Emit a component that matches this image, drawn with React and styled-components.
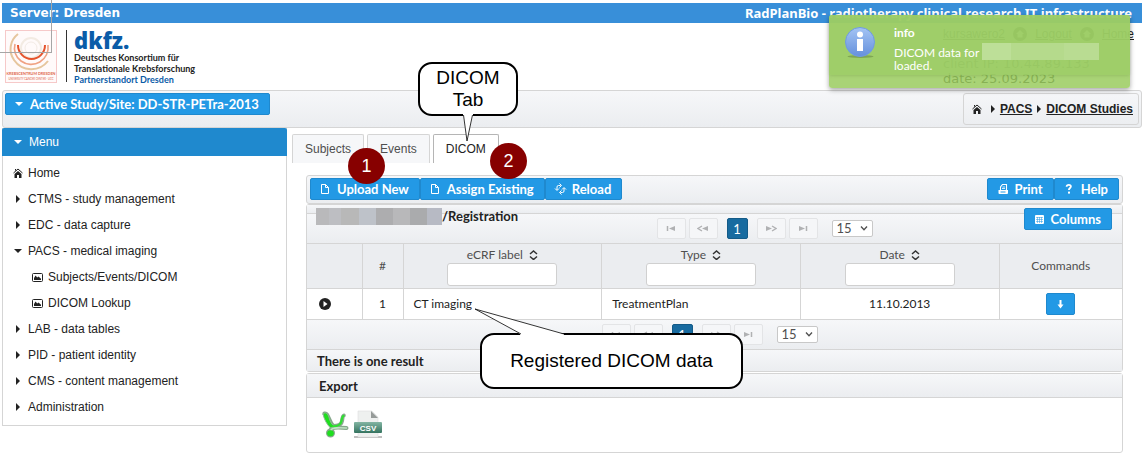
import React from "react";
import styled, { createGlobalStyle, css } from "styled-components";

const arial = `"Liberation Sans", Arial, sans-serif`;
const lato = `Lato, sans-serif`;
const line = "#d5d5d5";
const silver = "linear-gradient(#f6f7f9, #ebedf0)";

const Global = createGlobalStyle`
  *, *::before, *::after { box-sizing: border-box; }
  body { margin: 0; background: #fff; color: #222; font: 12px/16px ${arial}; }
  ul { list-style: none; margin: 0; padding: 0; }
  button, input, select { font: inherit; margin: 0; }
  svg { display: block; flex: none; }
`;

const Page = styled.div`
  position: relative;
  padding: 3px 5px 20px 2px;
`;
const TitleBar = styled.div`
  display: flex;
  align-items: center;
  justify-content: space-between;
  height: 20px;
  padding: 0 10px 0 8px;
  background: #388fd9;
  color: #fff;
  white-space: nowrap;
`;
const ServerName = styled.strong`
  font: bold 12px/20px "DejaVu Sans", sans-serif;
`;
const ProductName = styled.strong`
  font: bold 13px/20px "Noto Sans", sans-serif;
`;
const Header = styled.header`
  display: flex;
  justify-content: space-between;
  height: 67px;
  padding: 0 8px 0 3px;
`;
const Logos = styled.div`
  display: flex;
  gap: 9px;
  padding-top: 7px;
`;
const Dkfz = styled.div`
  height: 52px;
  padding-left: 7px;
  border-left: 1px solid #333;
  color: #222;
  font: bold 9px/11px ${lato};
  white-space: nowrap;
`;
const DkfzName = styled.div`
  height: 22px;
  color: #0a5ca8;
  font: 800 22px/20px "Open Sans", sans-serif;
`;
const DkfzSite = styled.div`
  color: #0a5ca8;
`;
const Session = styled.div`
  width: 191px;
  padding-top: 2px;
  color: #444;
  font: 13px/15px "DejaVu Sans", sans-serif;
`;
const SessionLinks = styled.div`
  display: flex;
  align-items: center;
  justify-content: space-between;
  height: 18px;
  margin-bottom: 13px;
  font: 12px/18px ${arial};
`;
const TextLink = styled.a`
  color: #222;
  text-decoration: underline;
`;
const Growl = styled.div`
  position: absolute;
  top: 15px;
  right: 17px;
  width: 301px;
  height: 73px;
  border-radius: 3px;
  background: rgba(150, 201, 88, 0.82);
  box-shadow: 0 2px 5px rgba(0, 0, 0, 0.35);
`;
const GrowlCard = styled.div`
  display: flex;
  gap: 17px;
  height: 60px;
  padding: 11px 15px 0;
  border-radius: 3px;
  background: rgba(156, 205, 102, 0.8);
  box-shadow: 0 1px 3px rgba(80, 120, 40, 0.2);
  color: #fff;
  font: 12px/13px ${lato};
`;
const GrowlText = styled.div`
  display: flex;
  flex-direction: column;
  gap: 6px;
  strong { line-height: 14px; }
`;
const Redacted = styled.span`
  display: inline-block;
  width: ${(p) => p.$w}px;
  height: 17px;
  vertical-align: top;
  background: ${(p) => p.$bg};
`;
const GrowlLine = styled.div`
  white-space: nowrap;
  span { margin: -3px 0; }
`;

const StudyBar = styled.div`
  display: flex;
  justify-content: space-between;
  align-items: flex-start;
  height: 38px;
  padding: 2px;
  border: 1px solid ${line};
  border-radius: 3px;
  background: ${silver};
`;
const Button = styled.button`
  display: flex;
  align-items: center;
  justify-content: center;
  gap: ${(p) => p.$gap || 4}px;
  height: 22px;
  padding: 0 ${(p) => (p.$square ? 8 : 10)}px 0 8px;
  border: 1px solid #1f89ce;
  border-radius: 2px;
  background: #2399e5;
  color: #fff;
  font: bold 13px/20px ${lato};
  white-space: nowrap;
`;
const Crumbs = styled.nav`
  display: flex;
  align-items: center;
  gap: 2px;
  height: 32px;
  padding: 0 5px 0 8px;
  border: 1px solid ${line};
  border-radius: 3px;
  font-weight: bold;
  svg:nth-of-type(1) { margin-right: 4px; }
`;

const Columns = styled.div`
  display: flex;
  align-items: flex-start;
`;
const Side = styled.nav`
  flex: none;
  width: 285px;
  padding-bottom: 5px;
  border: 1px solid ${line};
  border-top: 0;
`;
const SideHead = styled.div`
  display: flex;
  align-items: center;
  gap: 6px;
  height: 28px;
  margin: 0 -1px 4px;
  padding-left: 11px;
  border-radius: 2px 2px 0 0;
  background: #1f89ce;
  color: #fff;
`;
const SideLink = styled.a`
  display: flex;
  align-items: center;
  gap: 5px;
  height: 26px;
  padding-left: ${(p) => (p.$sub ? 29 : 10)}px;
  color: #222;
  text-decoration: none;
`;
const Main = styled.main`
  flex: 1;
  min-width: 0;
  padding: 6px 19px 0 5px;
`;
const Tabs = styled.div`
  display: flex;
  gap: 3px;
  margin-bottom: 12px;
`;
const Tab = styled.button`
  height: 29px;
  padding: 0 12px;
  border: 1px solid ${(p) => (p.$on ? "#b5b5b5" : line)};
  border-bottom: 0;
  border-radius: 2px 2px 0 0;
  background: ${(p) => (p.$on ? "#fff" : "#f6f7f9")};
  color: ${(p) => (p.$on ? "#222" : "#4f4f4f")};
`;
const Content = styled.div`
  padding-left: 14px;
  font: 13px/16px ${lato};
`;
const Toolbar = styled.div`
  display: flex;
  justify-content: space-between;
  height: 29px;
  padding: 2px 3px;
  border: 1px solid ${line};
  border-radius: 3px;
  background: ${silver};
`;
const Group = styled.div`
  display: flex;
`;
const TableBox = styled.section`
  border: 1px solid ${line};
  border-radius: 3px;
`;
const TableTitle = styled.div`
  position: relative;
  z-index: 1;
  display: flex;
  justify-content: space-between;
  align-items: flex-start;
  height: 8px;
  padding: 3px 10px 0 9px;
  background: ${silver};
  strong { display: flex; }
`;
const Pager = styled.div`
  display: flex;
  align-items: center;
  justify-content: center;
  height: ${(p) => (p.$top ? 30 : 29)}px;
  padding-left: ${(p) => (p.$top ? 100 : 0)}px;
  padding-right: ${(p) => (p.$top ? 0 : 10)}px;
  border-top: ${(p) => (p.$top ? 1 : 0)}px solid ${line};
  background: ${silver};
`;
const PageSteps = styled.div`
  display: flex;
  gap: 3px;
`;
const PageStep = styled.button`
  display: grid;
  place-items: center;
  width: 29px;
  height: 21px;
  padding: 0;
  border: 1px solid #e3e4e6;
  border-radius: 2px;
  background: #f5f6f8;
  color: #b0b1b3;
`;
const PageNumber = styled.button`
  width: 21px;
  height: 21px;
  margin: 0 9px;
  padding: 0;
  border: 1px solid #145b88;
  border-radius: 2px;
  background: #186ba0;
  color: #fff;
`;
const SizePick = styled.label`
  position: relative;
  margin-left: 14px;
  svg { position: absolute; right: 5px; top: 5px; pointer-events: none; }
`;
const SizeSelect = styled.select`
  display: block;
  appearance: none;
  width: 41px;
  height: 17px;
  padding: 0 4px;
  border: 1px solid #c8c8c8;
  border-radius: 2px;
  background: #fff;
  color: #4f4f4f;
  line-height: 15px;
`;
const Table = styled.table`
  width: 100%;
  table-layout: fixed;
  border-collapse: collapse;
  font-size: 12px;
`;
const cell = css`
  padding: 0 10px;
  border: 1px solid ${line};
  &:first-child { border-left: 0; }
  &:last-child { border-right: 0; }
`;
const Th = styled.th`
  ${cell}
  height: 45px;
  background: #ebedf0;
  color: #4f4f4f;
  font-weight: normal;
`;
const Td = styled.td`
  ${cell}
  height: 31px;
  text-align: ${(p) => p.$align || "left"};
`;
const SortLabel = styled.label`
  display: flex;
  flex-direction: column;
  align-items: center;
`;
const SortName = styled.span`
  display: flex;
  align-items: center;
  gap: 6px;
`;
const Filter = styled.input`
  width: 110px;
  height: 23px;
  border: 1px solid #d0d0d0;
  border-radius: 3px;
  background: #fff;
`;
const Center = styled.div`
  display: flex;
  justify-content: center;
`;
const Expander = styled.button`
  display: block;
  margin-left: 2px;
  padding: 0;
  border: 0;
  background: none;
`;
const Strip = styled.div`
  height: ${(p) => p.$h}px;
  padding: ${(p) => p.$pad};
  border-top: ${(p) => (p.$line ? 1 : 0)}px solid ${line};
  border-bottom: ${(p) => (p.$line ? 0 : 1)}px solid ${line};
  background: ${silver};
  font-weight: bold;
`;
const ExportBox = styled.section`
  margin-top: 1px;
  border: 1px solid ${line};
  border-radius: 3px;
`;
const ExportBody = styled.div`
  display: flex;
  gap: 5px;
  height: 54px;
  padding: 12px 14px;
`;
const IconLink = styled.a`
  display: block;
`;

const Badge = styled.div`
  position: absolute;
  left: ${(p) => p.$x}px;
  top: ${(p) => p.$y}px;
  width: 37px;
  height: 36px;
  border-radius: 50%;
  background: #870000;
  color: #fff;
  font: 18px/36px ${arial};
  text-align: center;
`;
const Callout = styled.div`
  position: absolute;
  left: ${(p) => p.$x}px;
  top: ${(p) => p.$y}px;
  display: grid;
  place-items: center;
  width: ${(p) => p.$w}px;
  height: ${(p) => p.$h}px;
  border: 2px solid #000;
  border-radius: 14px;
  background: #fff;
  color: #000;
  font: 19px/22px ${arial};
  text-align: center;
  svg { position: absolute; left: ${(p) => p.$tx}px; top: ${(p) => p.$ty}px; }
`;

const Tri = ({ down, color = "#222" }) => (
  <svg width="10" height="10" viewBox="0 0 10 10" fill={color}>
    <path d={down ? "M1 3h8L5 7z" : "M3 1v8l4-4z"} />
  </svg>
);
const House = () => (
  <svg width="10" height="10" viewBox="0 0 10 10">
    <path d="M.5 5 5 1l4.500 4M2.500 2.600V1" fill="none" stroke="#222" />
    <path d="M5 3 1.500 6v4H4V7h2v3h2.500V6z" fill="#222" />
  </svg>
);
const Picture = () => (
  <svg width="11" height="9" viewBox="0 0 11 9">
    <rect x=".5" y=".5" width="10" height="8" rx="1" fill="#fff" stroke="#222" />
    <path d="M2 7V5l1.6-2.5L5.2 4.5 6.5 3.6 9 5.8V7z" fill="#222" />
  </svg>
);
const Doc = () => (
  <svg width="14" height="10" viewBox="0 0 14 10" fill="none" stroke="#fff">
    <path d="M2.500.5h4l3 3v6h-7zM6.500.5v3h3" />
  </svg>
);
const Refresh = () => (
  <svg width="14" height="12" viewBox="0 0 14 12" fill="none" stroke="#fff">
    <path d="M6.500 2.500H4.500a1.500 1.500 0 0 0-1.500 1.500v3M1 5.500l2 2 2-2M5.500.5l2 2-2 2M6.500 9.500h2a1.500 1.500 0 0 0 1.500-1.500V5M12 6.500l-2-2-2 2M7.500 11.500l-2-2 2-2" />
  </svg>
);
const Printer = () => (
  <svg width="14" height="10" viewBox="0 0 14 10">
    <path d="M4.500 6V3l2-2.500h4V6" fill="none" stroke="#fff" strokeWidth="1.100" />
    <path d="M6.500 3h2.500M6 4.500h3" stroke="#fff" strokeWidth=".8" />
    <path d="M2.500 6h9.500v3a1 1 0 0 1-1 1H3.500a1 1 0 0 1-1-1z" fill="#fff" />
    <path d="M4.500 8h5" stroke="#2399e5" />
  </svg>
);
const Question = () => (
  <svg width="14" height="10" viewBox="0 0 14 10">
    <path d="M3.600 2.800C3.700 1.400 4.600.9 5.800.9c1.300 0 2.100.7 2.100 1.700C7.900 4 5.900 4.100 5.900 6" fill="none" stroke="#fff" strokeWidth="1.800" />
    <rect x="5" y="7.600" width="2" height="2" fill="#fff" />
  </svg>
);
const Calendar = () => (
  <svg width="14" height="10" viewBox="0 0 14 10">
    <rect x="2" y="1" width="9" height="9" rx="1" fill="#fff" />
    <path d="M3 3.500h7M3 5.500h7M3 7.500h7M4.500 3v6M6.500 3v6M8.500 3v6" stroke="#2399e5" strokeWidth=".5" />
  </svg>
);
const Arrow = () => (
  <svg width="11" height="10" viewBox="0 0 11 10">
    <path d="M5.500 1v7" stroke="#fff" strokeWidth="2" />
    <path d="M2.500 5.500h6l-3 4z" fill="#fff" />
  </svg>
);
const Sort = () => (
  <svg width="9" height="10" viewBox="0 0 9 10" fill="none" stroke="#333" strokeWidth="1.500">
    <path d="M1 4 4.500 1 8 4M1 6.500l3.500 3 3.500-3" />
  </svg>
);
const Chevron = () => (
  <svg width="8" height="7" viewBox="0 0 8 7" fill="none" stroke="#4f4f4f" strokeWidth="1.300">
    <path d="M1 1.500 4 4.800 7 1.500" />
  </svg>
);
const stepShapes = {
  First: <><path d="M2.500 1v5" stroke="currentColor" strokeWidth="1.500" /><path d="M10 1v5L4 3.500z" fill="currentColor" /></>,
  Previous: <><path d="M5 1 1 3.500 5 6" fill="none" stroke="currentColor" strokeWidth="1.300" /><path d="M11 1v5L5 3.500z" fill="currentColor" /></>,
  Next: <><path d="M7 1l4 2.500L7 6" fill="none" stroke="currentColor" strokeWidth="1.300" /><path d="M1 1v5l6-2.500z" fill="currentColor" /></>,
  Last: <><path d="M9.500 1v5" stroke="currentColor" strokeWidth="1.500" /><path d="M2 1v5l6-2.500z" fill="currentColor" /></>,
};
const Step = ({ kind }) => (
  <PageStep aria-label={`${kind} page`}>
    <svg width="12" height="7" viewBox="0 0 12 7">{stepShapes[kind]}</svg>
  </PageStep>
);
const Paginator = ({ top }) => (
  <Pager $top={top}>
    <PageSteps><Step kind="First" /><Step kind="Previous" /></PageSteps>
    <PageNumber>1</PageNumber>
    <PageSteps><Step kind="Next" /><Step kind="Last" /></PageSteps>
    <SizePick>
      <SizeSelect aria-label="Rows per page" defaultValue="15"><option>15</option></SizeSelect>
      <Chevron />
    </SizePick>
  </Pager>
);

const CancerCenter = () => (
  <svg width="52" height="53" viewBox="0 0 52 53" fill="none" role="img" aria-label="Krebscentrum Dresden">
    <rect x=".5" y=".5" width="51" height="52" fill="#fffafa" stroke="#f6c9c9" />
    <circle cx="26" cy="18" r="10" stroke="#f3ebe3" strokeWidth="2" />
    <circle cx="26" cy="18" r="6" stroke="#f3ebe6" />
    <path d="M13 4A19 19 0 0 0 9 30 21 21 0 0 0 43 31" stroke="#e6c69e" strokeWidth="2" />
    <path d="M10 14a16 16 0 0 0 6 17A17 17 0 0 0 43 15" stroke="#f0a283" strokeWidth="1.600" />
    <path d="M13 15a13.500 14 0 0 0 27 0" stroke="#e5532d" strokeWidth="2" />
    <text x="26" y="45" textAnchor="middle" fill="#e0674a" fontFamily={lato} fontWeight="bold" fontSize="3.800">KREBSCENTRUM DRESDEN</text>
    <text x="26" y="50" textAnchor="middle" fill="#e0674a" fontFamily={lato} fontSize="2.700">UNIVERSITY CANCER CENTER · UCC</text>
  </svg>
);
const CrossHair = styled.div`
  position: absolute;
  left: 0;
  top: 0;
  width: 52px;
  height: 53px;
  border: solid #a6a6a6;
  border-width: 0 1px 1px 0;
`;
const InfoIcon = () => (
  <svg width="33" height="33" viewBox="0 0 33 33">
    <defs>
      <linearGradient id="info" x1="0" y1="0" x2="0" y2="1">
        <stop offset="0" stopColor="#a4c4f4" />
        <stop offset="1" stopColor="#6590dc" />
      </linearGradient>
    </defs>
    <ellipse cx="16.500" cy="30.500" rx="13" ry="1.500" fill="#7fa552" />
    <circle cx="16" cy="16" r="14.500" fill="url(#info)" stroke="#6f9be0" />
    <circle cx="16" cy="8.500" r="3" fill="#fff" />
    <path d="M13 13h6v12h-6z" fill="#fff" />
  </svg>
);
const Excel = () => (
  <svg width="28" height="28" viewBox="0 0 28 28" fill="none" strokeLinecap="round" strokeLinejoin="round">
    <g stroke="#86a88b" strokeWidth="4">
      <path d="M3.500 3.500c4-1 4 8 9 13" />
      <path d="M12.500 16c4 0 8-1 8.500-5 .5-3 .5-5 1.800-5.500" />
      <path d="M9 22c0-5 6-5 16.500-4" />
      <circle cx="9.500" cy="23" r="2.500" />
    </g>
    <path d="M2 4c3-3 5 0 6 3.500s2.500 7.500 6 9L9.500 18C5.500 14 3 9 2 4z" fill="#1fdf1f" stroke="#8fb795" />
    <path d="M12.500 16.300c4 0 7.500-2 8-5.500.5-3 .8-4.300 2-5" stroke="#2fe032" strokeWidth="2.200" />
    <path d="M10 20c2-3 8-2.500 15.500-2" stroke="#c2e3c5" strokeWidth="1.500" />
    <ellipse cx="9.500" cy="23.300" rx="3.300" ry="3" fill="#1fdf1f" />
  </svg>
);
const Csv = () => (
  <svg width="28" height="28" viewBox="0 0 28 28">
    <defs>
      <linearGradient id="band" x1="0" y1="0" x2="0" y2="1">
        <stop offset="0" stopColor="#83b5a3" />
        <stop offset="1" stopColor="#34735f" />
      </linearGradient>
    </defs>
    <path d="M0 27h28" stroke="#aaa" strokeWidth="1.500" />
    <path d="M4 1h14l6 6v20H4z" fill="#eef0ef" stroke="#ddd" strokeWidth=".6" />
    <path d="M17 1v7h7z" fill="#969b99" />
    <rect x="0" y="12" width="28" height="11" rx="1" fill="url(#band)" />
    <text x="14" y="20.500" textAnchor="middle" fill="#fff" fontFamily={arial} fontWeight="bold" fontSize="8">CSV</text>
  </svg>
);
const Dot = () => (
  <svg width="14" height="14" viewBox="0 0 14 14"><circle cx="7" cy="7" r="7" fill="#222" /><path d="M7 3 3 7h1.500v3.500h5V7H11z" fill="#fff" /></svg>
);

const menu = [
  { text: "Home", icon: <House /> },
  { text: "CTMS - study management", icon: <Tri /> },
  { text: "EDC - data capture", icon: <Tri /> },
  { text: "PACS - medical imaging", icon: <Tri down /> },
  { text: "Subjects/Events/DICOM", icon: <Picture />, sub: true },
  { text: "DICOM Lookup", icon: <Picture />, sub: true },
  { text: "LAB - data tables", icon: <Tri /> },
  { text: "PID - patient identity", icon: <Tri /> },
  { text: "CMS - content management", icon: <Tri /> },
  { text: "Administration", icon: <Tri /> },
];

const titleMosaic = "linear-gradient(90deg,#b9b9bb 0 10%,#bdbec2 10% 20%,#b8b8b8 20% 34%,#bec2c9 34% 48%,#adadaf 48% 61%,#b8b8ba 61% 75%,#aaabad 75% 88%,#b7bac4 88%)";
const growlMosaic = "linear-gradient(90deg,#bddf98 0 25%,#b5da8c 25% 70%,#b9dc92 70%)";

export default function App() {
  return (
    <Page>
      <Global />
      <TitleBar>
        <ServerName>Server: Dresden</ServerName>
        <ProductName>RadPlanBio - radiotherapy clinical research IT infrastructure</ProductName>
      </TitleBar>
      <Header>
        <Logos>
          <CancerCenter />
          <Dkfz>
            <DkfzName>dkfz.</DkfzName>
            <div>Deutsches Konsortium für</div>
            <div>Translationale Krebsforschung</div>
            <DkfzSite>Partnerstandort Dresden</DkfzSite>
          </Dkfz>
        </Logos>
        <Session>
          <SessionLinks>
            <TextLink href="#user">kursawero2</TextLink>
            <Dot />
            <TextLink href="#logout">Logout</TextLink>
            <Dot />
            <TextLink href="#home">Home</TextLink>
          </SessionLinks>
          <div>client IP: 10.44.89.133</div>
          <div>date: 25.09.2023</div>
        </Session>
      </Header>

      <StudyBar>
        <Button $gap={6}><Tri down color="#fff" />Active Study/Site: DD-STR-PETra-2013</Button>
        <Crumbs aria-label="Breadcrumb">
          <House />
          <Tri /><TextLink href="#pacs">PACS</TextLink>
          <Tri /><TextLink href="#studies">DICOM Studies</TextLink>
        </Crumbs>
      </StudyBar>

      <Columns>
        <Side>
          <SideHead><Tri down color="#fff" />Menu</SideHead>
          <ul>
            {menu.map((m) => (
              <li key={m.text}><SideLink href="#menu" $sub={m.sub}>{m.icon}{m.text}</SideLink></li>
            ))}
          </ul>
        </Side>
        <Main>
          <Tabs role="tablist">
            <Tab role="tab">Subjects</Tab>
            <Tab role="tab">Events</Tab>
            <Tab role="tab" aria-selected="true" $on>DICOM</Tab>
          </Tabs>
          <Content>
            <Toolbar>
              <Group>
                <Button><Doc />Upload New</Button>
                <Button><Doc />Assign Existing</Button>
                <Button><Refresh />Reload</Button>
              </Group>
              <Group>
                <Button><Printer />Print</Button>
                <Button><Question />Help</Button>
              </Group>
            </Toolbar>
            <TableBox>
              <TableTitle>
                <strong><Redacted $w={126} $bg={titleMosaic} />/Registration</strong>
                <Button><Calendar />Columns</Button>
              </TableTitle>
              <Paginator top />
              <Table>
                <colgroup>
                  <col width="55" /><col width="41" /><col /><col /><col /><col width="123" />
                </colgroup>
                <thead>
                  <tr>
                    <Th />
                    <Th>#</Th>
                    {["eCRF label", "Type", "Date"].map((name) => (
                      <Th key={name}>
                        <SortLabel><SortName>{name} <Sort /></SortName><Filter type="text" /></SortLabel>
                      </Th>
                    ))}
                    <Th>Commands</Th>
                  </tr>
                </thead>
                <tbody>
                  <tr>
                    <Td><Expander aria-label="Expand row"><svg width="12" height="12" viewBox="0 0 12 12"><circle cx="6" cy="6" r="6" fill="#222" /><path d="M4.500 3v6l4-3z" fill="#fff" /></svg></Expander></Td>
                    <Td $align="center">1</Td>
                    <Td>CT imaging</Td>
                    <Td>TreatmentPlan</Td>
                    <Td $align="center">11.10.2013</Td>
                    <Td><Center><Button $square aria-label="Download"><Arrow /></Button></Center></Td>
                  </tr>
                </tbody>
              </Table>
              <Paginator />
              <Strip $h={22} $pad="3px 10px" $line>There is one result</Strip>
            </TableBox>
            <ExportBox>
              <Strip $h={24} $pad="4px 12px">Export</Strip>
              <ExportBody>
                <IconLink href="#xls" aria-label="Export to Excel"><Excel /></IconLink>
                <IconLink href="#csv" aria-label="Export to CSV"><Csv /></IconLink>
              </ExportBody>
            </ExportBox>
          </Content>
        </Main>
      </Columns>

      <CrossHair />
      <Growl role="status">
        <GrowlCard>
          <InfoIcon />
          <GrowlText>
            <strong>info</strong>
            <div>
              <GrowlLine>DICOM data for <Redacted $w={117} $bg={growlMosaic} /></GrowlLine>
              loaded.
            </div>
          </GrowlText>
        </GrowlCard>
      </Growl>
      <Badge $x={348} $y={148}>1</Badge>
      <Badge $x={490} $y={143}>2</Badge>
      <Callout $x={418} $y={62} $w={100} $h={54} $tx={42} $ty={50}>
        <svg width="12" height="28" viewBox="0 0 12 28">
          <path d="M1 0v2l4 25L11 2V0z" fill="#fff" />
          <path d="M1.500 1 5 27 10.500 1" fill="none" stroke="#000" strokeWidth=".8" />
        </svg>
        <div>DICOM<br />Tab</div>
      </Callout>
      <Callout $x={480} $y={333} $w={263} $h={56} $tx={-8} $ty={-27}>
        <svg width="100" height="30" viewBox="0 0 100 30">
          <path d="M1 1 46 26v2h44v-2z" fill="#fff" />
          <path d="M47 26 1 1l89 25" fill="none" stroke="#000" strokeWidth=".8" />
        </svg>
        <div>Registered DICOM data</div>
      </Callout>
    </Page>
  );
}
